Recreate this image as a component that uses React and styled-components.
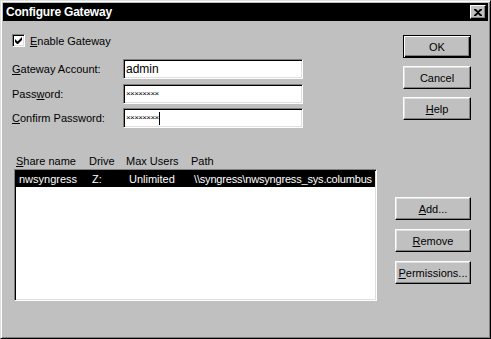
import React from "react";
import styled, { createGlobalStyle } from "styled-components";

const GlobalStyle = createGlobalStyle`
  html, body {
    margin: 0;
    padding: 0;
    background: #c0c0c0;
  }
  body {
    font-family: "Liberation Sans", Arial, sans-serif;
    font-size: 11px;
    color: #000;
  }
`;

const shares = [
  {
    name: "nwsyngress",
    drive: "Z:",
    users: "Unlimited",
    path: "\\\\syngress\\nwsyngress_sys.columbus",
  },
];

const Key = ({ children }) => <u>{children}</u>;

const App = () => {
  return (
    <>
      <GlobalStyle />
      <Window>
        <TitleBar>
          <Title>Configure Gateway</Title>
          <CloseButton>
            <svg width="8" height="7" viewBox="0 0 8 7">
              <path
                d="M0 0h2l2 2 2-2h2v1L5 3.5 8 6v1H6L4 5 2 7H0V6l3-2.5L0 1z"
                fill="#000"
              />
            </svg>
          </CloseButton>
        </TitleBar>

        <Body>
          <TopSection>
            <Form>
              <CheckRow>
                <CheckBox>
                  <svg width="7" height="7" viewBox="0 0 7 7">
                    <path d="M0 2v3l2 2h1l4-4V0L2.5 4.5z" fill="#000" />
                  </svg>
                </CheckBox>
                <span>
                  <Key>E</Key>nable Gateway
                </span>
              </CheckRow>

              <Fields>
                <Label>
                  <Key>G</Key>ateway Account:
                </Label>
                <Field>admin</Field>
                <Label>
                  Pass<Key>w</Key>ord:
                </Label>
                <Field>
                  <Masked>××××××××</Masked>
                </Field>
                <Label>
                  <Key>C</Key>onfirm Password:
                </Label>
                <Field>
                  <Masked>××××××××</Masked>
                  <Caret />
                </Field>
              </Fields>
            </Form>

            <ButtonColumn $gap={8}>
              <Button $default $width={68}>
                OK
              </Button>
              <Button $width={68}>Cancel</Button>
              <Button $width={68}>
                <Key>H</Key>elp
              </Button>
            </ButtonColumn>
          </TopSection>

          <BottomSection>
            <ListArea>
              <HeaderRow>
                <span>
                  <Key>S</Key>hare name
                </span>
                <span>Drive</span>
                <span>Max Users</span>
                <span>Path</span>
              </HeaderRow>
              <ListBox>
                {shares.map((s) => (
                  <ShareRow key={s.name} $selected>
                    <span>{s.name}</span>
                    <span>{s.drive}</span>
                    <span>{s.users}</span>
                    <PathText>{s.path}</PathText>
                  </ShareRow>
                ))}
              </ListBox>
            </ListArea>

            <ButtonColumn $gap={9} $top={44}>
              <Button $width={76}>
                <Key>A</Key>dd...
              </Button>
              <Button $width={76}>
                <Key>R</Key>emove
              </Button>
              <Button $width={76}>
                <Key>P</Key>ermissions...
              </Button>
            </ButtonColumn>
          </BottomSection>
        </Body>
      </Window>
    </>
  );
};

const Window = styled.div`
  box-sizing: border-box;
  width: 491px;
  height: 339px;
  padding: 2px;
  background: #c0c0c0;
  border: 1px solid;
  border-color: #dfdfdf #000 #000 #dfdfdf;
  box-shadow: inset 1px 1px #fff, inset -1px -1px #808080;
  display: flex;
  flex-direction: column;
`;

const TitleBar = styled.div`
  height: 18px;
  background: #000;
  display: flex;
  align-items: center;
  justify-content: space-between;
  padding: 0 2px 0 3px;
`;

const Title = styled.span`
  color: #fff;
  font-weight: bold;
  font-size: 12px;
  line-height: 18px;
  letter-spacing: -0.2px;
`;

const CloseButton = styled.div`
  box-sizing: border-box;
  width: 16px;
  height: 14px;
  background: #c0c0c0;
  border: 1px solid;
  border-color: #fff #000 #000 #fff;
  box-shadow: inset -1px -1px #808080;
  display: flex;
  align-items: center;
  justify-content: center;
  padding-right: 1px;
`;

const Body = styled.div`
  flex: 1;
  display: flex;
  flex-direction: column;
  padding: 0 17px 0 9px;
`;

const TopSection = styled.div`
  display: flex;
  justify-content: space-between;
  align-items: flex-start;
`;

const Form = styled.div`
  display: flex;
  flex-direction: column;
`;

const CheckRow = styled.div`
  display: flex;
  align-items: center;
  gap: 5px;
  margin-top: 13px;
  height: 13px;
`;

const sunken = `
  border: 1px solid;
  border-color: #808080 #fff #fff #808080;
  box-shadow: inset 1px 1px #000, inset -1px -1px #dfdfdf;
`;

const CheckBox = styled.div`
  box-sizing: border-box;
  width: 13px;
  height: 13px;
  background: #fff;
  ${sunken}
  display: flex;
  align-items: center;
  justify-content: center;
`;

const Fields = styled.div`
  display: grid;
  grid-template-columns: 111px 180px;
  grid-auto-rows: 20px;
  row-gap: 4.5px;
  align-items: center;
  margin-top: 12px;
`;

const Label = styled.span`
  white-space: nowrap;
`;

const Field = styled.div`
  box-sizing: border-box;
  height: 20px;
  background: #fff;
  ${sunken}
  display: flex;
  align-items: center;
  padding: 0 2px;
  font-size: 12px;
`;

const Masked = styled.span`
  font-size: 8px;
  letter-spacing: -0.6px;
  line-height: 1;
  color: #000;
`;

const Caret = styled.span`
  width: 1px;
  height: 13px;
  background: #000;
`;

const ButtonColumn = styled.div`
  display: flex;
  flex-direction: column;
  gap: ${(p) => p.$gap}px;
  margin-top: ${(p) => p.$top || 14}px;
`;

const Button = styled.div`
  box-sizing: border-box;
  width: ${(p) => p.$width}px;
  height: 23px;
  background: #c0c0c0;
  display: flex;
  align-items: center;
  justify-content: center;
  border: 1px solid;
  border-color: ${(p) => (p.$default ? "#000" : "#fff #000 #000 #fff")};
  box-shadow: ${(p) =>
    p.$default
      ? "inset 1px 1px #fff, inset -1px -1px #000, inset -2px -2px #808080"
      : "inset -1px -1px #808080, inset 1px 1px #dfdfdf"};
`;

const BottomSection = styled.div`
  display: flex;
  justify-content: space-between;
  align-items: flex-start;
  margin-top: 25px;
`;

const ListArea = styled.div`
  display: flex;
  flex-direction: column;
  margin-left: 2px;
`;

const columns = `
  display: grid;
  grid-template-columns: 73px 37px 65px 1fr;
  white-space: nowrap;
`;

const HeaderRow = styled.div`
  ${columns}
  height: 16px;
  align-items: center;
  padding-left: 2px;
`;

const ListBox = styled.div`
  box-sizing: border-box;
  width: 363px;
  height: 132px;
  background: #fff;
  ${sunken}
  padding: 1px;
  overflow: hidden;
`;

const ShareRow = styled.div`
  ${columns}
  height: 16px;
  align-items: center;
  padding-left: 3px;
  background: ${(p) => (p.$selected ? "#000" : "transparent")};
  color: ${(p) => (p.$selected ? "#fff" : "#000")};
`;

const PathText = styled.span`
  letter-spacing: -0.18px;
`;

export default App;
